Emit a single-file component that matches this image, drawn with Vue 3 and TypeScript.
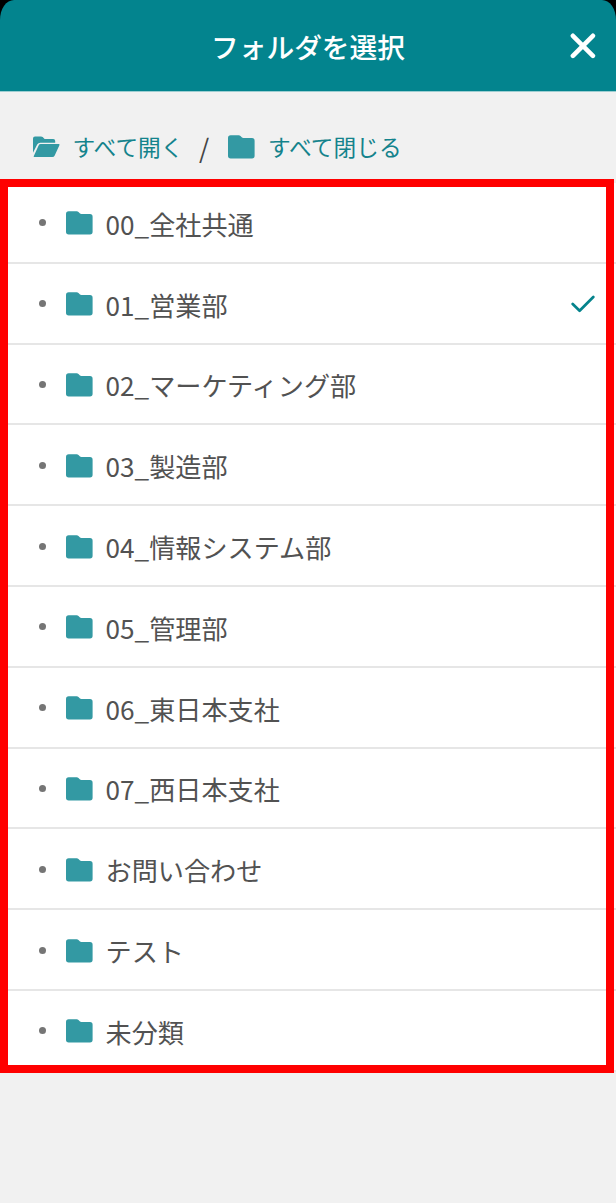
<script setup lang="ts">
interface Folder {
  name: string
  selected?: boolean
}

const folders: Folder[] = [
  { name: '00_全社共通' },
  { name: '01_営業部', selected: true },
  { name: '02_マーケティング部' },
  { name: '03_製造部' },
  { name: '04_情報システム部' },
  { name: '05_管理部' },
  { name: '06_東日本支社' },
  { name: '07_西日本支社' },
  { name: 'お問い合わせ' },
  { name: 'テスト' },
  { name: '未分類' },
]
</script>

<template>
  <div class="screen">
    <header class="header">
      <h1 class="title">フォルダを選択</h1>
      <button class="close" type="button" aria-label="閉じる">
        <svg width="26" height="26" viewBox="0 0 26 26">
          <path d="M2.9 2.8 L22.9 22.8 M22.9 2.8 L2.9 22.8" fill="none" stroke="#fff" stroke-width="4.6" stroke-linecap="round" />
        </svg>
      </button>
    </header>

    <nav class="tools">
      <a class="tool">
        <svg class="open-icon" width="27" height="22" viewBox="0 0 27 22">
          <path d="M0 16.8 V2.4 Q0 .4 2 .4 H8 Q9 .4 9.7 1.1 L11.6 3 H20.2 Q22.2 3 22.2 5 V6.7 H7.4 Q5.2 6.7 4.2 8.5 Z" />
          <path d="M.7 20.3 L5.6 9.5 Q6.2 8.1 7.8 8.1 H25.7 Q27 8.1 26.4 9.3 L21.7 19.4 Q21 21 19.3 21 H1.2 Q.4 21 .7 20.3 Z" />
        </svg>
        <span>すべて開く</span>
      </a>
      <span class="slash">/</span>
      <a class="tool">
        <svg class="folder-icon" width="27" height="24" viewBox="0 0 27 24">
          <path d="M0 3 Q0 .3 2.7 .3 H10.6 Q11.8 .3 12.5 1.1 L14 2.6 Q14.5 3 15.3 3 H24 Q26.6 3 26.6 5.8 V20.8 Q26.6 23.5 24 23.5 H2.7 Q0 23.5 0 20.8 Z" />
        </svg>
        <span>すべて閉じる</span>
      </a>
    </nav>

    <main class="list-wrap">
      <ul class="list">
        <li v-for="folder in folders" :key="folder.name" class="row">
          <span class="dot"></span>
          <svg class="folder-icon" width="27" height="24" viewBox="0 0 27 24">
            <path d="M0 3 Q0 .3 2.7 .3 H10.6 Q11.8 .3 12.5 1.1 L14 2.6 Q14.5 3 15.3 3 H24 Q26.6 3 26.6 5.8 V20.8 Q26.6 23.5 24 23.5 H2.7 Q0 23.5 0 20.8 Z" />
          </svg>
          <span class="name">{{ folder.name }}</span>
          <svg v-if="folder.selected" class="check" width="24" height="18" viewBox="0 0 24 18">
            <path d="M1.7 9 L8.6 15.7 L22.3 2" fill="none" stroke="#05838c" stroke-width="2.7" stroke-linecap="round" stroke-linejoin="round" />
          </svg>
        </li>
      </ul>
      <div class="highlight"></div>
    </main>
  </div>
</template>

<style>
html,
body {
  margin: 0;
  background: #f1f1f1;
}
</style>

<style scoped>
.screen {
  width: 616px;
  height: 1203px;
  overflow: hidden;
  background: linear-gradient(#000 0 40px, #f1f1f1 40px);
  color: #525252;
  font-family: "Noto Sans CJK JP", sans-serif;
}

.header {
  box-sizing: border-box;
  height: 92px;
  display: grid;
  grid-template-columns: 60px 1fr 60px;
  align-items: center;
  background: #03848e;
  border-bottom: 1px solid #9dced1;
  border-radius: 14px 14px 0 0 / 20px 20px 0 0;
  color: #fff;
}

.title {
  grid-column: 2;
  margin: 0;
  padding-top: 1px;
  text-align: center;
  font-size: 27.7px;
  font-weight: 500;
  line-height: 40px;
}

.close {
  display: flex;
  padding: 0;
  margin-left: 14px;
  border: 0;
  background: none;
}

.tools {
  box-sizing: border-box;
  height: 91px;
  padding: 20px 0 1px 32.5px;
  display: flex;
  align-items: center;
  color: #14838c;
  font-size: 22.7px;
  line-height: 32px;
}

.tool {
  display: flex;
  align-items: center;
}

.open-icon,
.folder-icon {
  flex: none;
  fill: #3399a3;
}

.tool .open-icon,
.tool .folder-icon {
  margin-right: 13px;
}

.slash {
  width: 10px;
  margin: 0 19px 0 15.5px;
  color: #444;
  font-size: 26px;
}

.list-wrap {
  position: relative;
}

.list {
  margin: 0;
  padding: 0;
  list-style: none;
  background: #fff;
}

.row {
  box-sizing: border-box;
  height: 80.8px;
  padding: 1px 21px 0 39px;
  display: flex;
  align-items: center;
  border-bottom: 2px solid #e6e6e6;
}

.dot {
  width: 7px;
  height: 7px;
  margin-right: 20px;
  border-radius: 50%;
  background: #757575;
}

.row .folder-icon {
  margin-top: 1px;
}

.name {
  margin-left: 12.5px;
  padding-top: 2px;
  font-size: 26.15px;
  line-height: 38px;
}

.check {
  margin-left: auto;
}

.highlight {
  position: absolute;
  inset: -4px 2.5px -1px 0;
  border: 8px solid #f00;
}
</style>
